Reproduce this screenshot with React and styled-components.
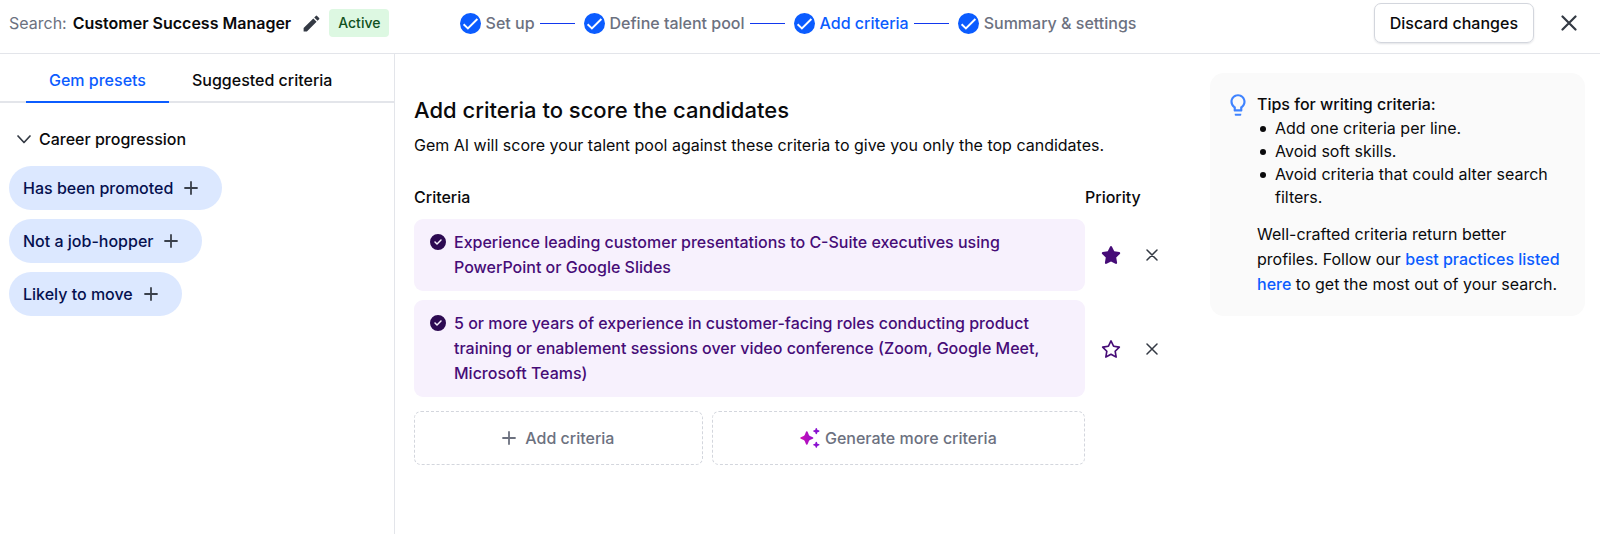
import { useState } from "react";
import styled, { createGlobalStyle } from "styled-components";
import { MdEdit, MdOutlineLightbulb } from "react-icons/md";
import { FaCircleCheck, FaRegStar, FaStar } from "react-icons/fa6";

const GlobalStyle = createGlobalStyle`
  :root {
    --color-blue: #0b5cff;
    --color-blue-100: #dce8ff;
    --color-navy: #05104f;
    --color-purple: #460c77;
    --color-purple-50: #f7f1fd;
    --color-grey-50: #fafafa;
    --color-grey-200: #e3e5ea;
    --color-grey-300: #d3d6dd;
    --color-grey-500: #6c717f;
    --color-grey-700: #343a44;
    --color-ink: #0a0a0c;
  }

  * {
    box-sizing: border-box;
    margin: 0;
    padding: 0;
  }

  body {
    font-family: Inter, "Liberation Sans", sans-serif;
    font-size: 16px;
    line-height: 24px;
    color: var(--color-ink);
    background-color: #fff;
  }

  button {
    font: inherit;
    color: inherit;
    background: none;
    border: none;
    cursor: pointer;
  }

  svg {
    display: block;
    flex-shrink: 0;
  }
`;

const Page = styled.div`
  display: flex;
  flex-direction: column;
  min-height: 100vh;
`;

const StyledHeader = styled.header`
  display: grid;
  grid-template-columns: 1fr auto 1fr;
  align-items: center;
  padding: 3px 13px 10px 9px;
  border-bottom: 1px solid var(--color-grey-200);
`;

const SearchInfo = styled.div`
  display: flex;
  align-items: center;
`;

const SearchLabel = styled.span`
  color: var(--color-grey-500);
  margin-right: 6px;
`;

const SearchName = styled.h1`
  font-size: 16px;
  font-weight: 600;
`;

const EditButton = styled.button`
  margin: 0 7px 0 10px;
  color: var(--color-grey-700);
`;

const Badge = styled.span`
  padding: 2px 9px;
  border-radius: 4px;
  font-size: 14px;
  font-weight: 500;
  color: #0f5120;
  background-color: #ddf8e2;
`;

const Steps = styled.ol`
  display: flex;
  align-items: center;
  list-style: none;
`;

const Step = styled.li`
  display: flex;
  align-items: center;
  gap: 5px;
  font-weight: 500;
  color: ${(props) =>
    props.$current ? "var(--color-blue)" : "var(--color-grey-500)"};

  &:not(:last-child)::after {
    content: "";
    width: 35px;
    height: 1px;
    margin-right: 9px;
    background-color: #1238ee;
  }
`;

const HeaderActions = styled.div`
  display: flex;
  align-items: center;
  justify-content: flex-end;
  gap: 21px;
  padding-right: 4px;
`;

const OutlineButton = styled.button`
  padding: 7px 15px;
  border: 1px solid var(--color-grey-300);
  border-radius: 7px;
  font-weight: 500;
  box-shadow: 0 1px 2px rgba(20, 25, 50, 0.12);
`;

const IconButton = styled.button`
  display: grid;
  place-items: center;
  width: 28px;
  height: 28px;
  color: ${(props) => props.$color || "var(--color-grey-700)"};
`;

const Content = styled.div`
  display: flex;
  flex: 1;
`;

const Sidebar = styled.aside`
  flex: 0 0 395px;
  border-right: 1px solid var(--color-grey-200);
`;

const Tabs = styled.div`
  display: flex;
  padding: 0 26px;
  box-shadow: inset 0 -2px 0 var(--color-grey-200);
`;

const Tab = styled.button`
  padding: 14px 23px 9px;
  font-weight: 500;
  color: ${(props) => (props.$active ? "var(--color-blue)" : "inherit")};
  border-bottom: 2px solid
    ${(props) => (props.$active ? "var(--color-blue)" : "transparent")};
`;

const GroupToggle = styled.button`
  display: flex;
  align-items: center;
  gap: 8px;
  margin: 24px 0 15px 17px;
  font-weight: 500;

  svg {
    color: var(--color-grey-700);
    transform: ${(props) => (props.$open ? "none" : "rotate(-90deg)")};
  }
`;

const PresetList = styled.ul`
  display: flex;
  flex-direction: column;
  align-items: flex-start;
  gap: 9px;
  padding-left: 9px;
  list-style: none;
`;

const Preset = styled.button`
  display: flex;
  align-items: center;
  gap: 11px;
  padding: 10px 24px 10px 14px;
  border-radius: 22px;
  font-weight: 500;
  color: var(--color-navy);
  background-color: var(--color-blue-100);

  svg {
    color: #3a404b;
  }
`;

const Main = styled.main`
  flex: 1;
  display: grid;
  grid-template-columns: minmax(0, 1fr) 375px;
  align-items: start;
  gap: 43px;
  padding: 19px 15px 19px 19px;
`;

const Editor = styled.section`
  padding-top: 20px;
`;

const Title = styled.h2`
  font-size: 22px;
  line-height: 34px;
  font-weight: 500;
`;

const Subtitle = styled.p`
  margin: 6px 0 28px;
`;

const Columns = styled.div`
  display: grid;
  grid-template-columns: minmax(0, 1fr) 82px;
`;

const ColumnTitle = styled.h3`
  font-size: 16px;
  font-weight: 500;
  margin-bottom: 10px;
`;

const CriteriaList = styled.ul`
  display: flex;
  flex-direction: column;
  gap: 9px;
  list-style: none;
`;

const CriterionText = styled.p`
  display: flex;
  gap: 8px;
  padding: 11px 30px 11px 16px;
  border-radius: 9px;
  line-height: 25px;
  font-weight: 500;
  color: var(--color-purple);
  background-color: var(--color-purple-50);

  svg {
    margin-top: 4px;
    color: #2d0a52;
  }
`;

const CriterionActions = styled.div`
  display: flex;
  align-items: center;
  gap: 13px;
  padding-left: 12px;
`;

const DashedButton = styled.button`
  flex: 1 1 auto;
  display: flex;
  align-items: center;
  justify-content: center;
  gap: ${(props) => props.$gap}px;
  padding: 14px;
  border: 1px dashed var(--color-grey-300);
  border-radius: 7px;
  font-weight: 500;
  color: var(--color-grey-500);
`;

const AddRow = styled.div`
  display: flex;
  gap: 9px;
  margin-top: 14px;
`;

const TipsCard = styled.aside`
  display: flex;
  gap: 6px;
  padding: 19px 18px 19px 15px;
  border-radius: 14px;
  background-color: var(--color-grey-50);

  > svg {
    color: #3f83ff;
  }
`;

const TipsTitle = styled.h3`
  font-size: 16px;
  font-weight: 500;
  line-height: 25px;
`;

const TipsList = styled.ul`
  margin-bottom: 13px;
  line-height: 23px;
  list-style: none;
`;

const TipsItem = styled.li`
  display: flex;
  gap: 9px;

  &::before {
    content: "";
    flex-shrink: 0;
    width: 6px;
    height: 6px;
    margin: 9px 0 0 3px;
    border-radius: 50%;
    background-color: currentColor;
  }
`;

const TipsNote = styled.p`
  line-height: 25px;
`;

const TipsLink = styled.a`
  font-weight: 500;
  color: var(--color-blue);
  text-decoration: none;
`;

const steps = [
  "Set up",
  "Define talent pool",
  "Add criteria",
  "Summary & settings",
];

const tabs = ["Gem presets", "Suggested criteria"];

const presets = ["Has been promoted", "Not a job-hopper", "Likely to move"];

const initialCriteria = [
  {
    id: 1,
    text: "Experience leading customer presentations to C-Suite executives using PowerPoint or Google Slides",
    starred: true,
  },
  {
    id: 2,
    text: "5 or more years of experience in customer-facing roles conducting product training or enablement sessions over video conference (Zoom, Google Meet, Microsoft Teams)",
    starred: false,
  },
];

const tips = [
  "Add one criteria per line.",
  "Avoid soft skills.",
  "Avoid criteria that could alter search filters.",
];

function LineIcon({ d, size = 14, width = 2 }) {
  return (
    <svg
      width={size}
      height={size}
      viewBox={`0 0 ${size} ${size}`}
      fill="none"
      stroke="currentColor"
      strokeWidth={width}
      strokeLinecap="round"
      strokeLinejoin="round"
      aria-hidden="true"
    >
      <path d={d} />
    </svg>
  );
}

function PlusIcon() {
  return <LineIcon d="M7 1v12M1 7h12" width={1.8} />;
}

function StepIcon() {
  return (
    <svg width="21" height="21" viewBox="0 0 21 21" aria-hidden="true">
      <circle cx="10.5" cy="10.5" r="10.5" fill="#0b5cff" />
      <path
        d="M3.6 11.3l4.3 4.1L17.4 6"
        fill="none"
        stroke="#fff"
        strokeWidth="1.9"
      />
    </svg>
  );
}

function SparkleIcon() {
  return (
    <svg width="20" height="20" viewBox="0 0 20 20" aria-hidden="true">
      <defs>
        <linearGradient id="sparkle" x1="0" x2="20" gradientUnits="userSpaceOnUse">
          <stop offset="0" stopColor="#cf0fb4" />
          <stop offset="1" stopColor="#7a12d6" />
        </linearGradient>
      </defs>
      <g fill="url(#sparkle)">
        <path d="M6.8 3.3Q7.5 3.3 7.9 4.5L8.9 7Q9.2 7.7 9.9 8L12.2 9Q13.4 9.5 13.4 10T12.2 11L9.9 12Q9.2 12.3 8.9 13L7.9 15.5Q7.5 16.7 6.8 16.7T5.7 15.5L4.7 13Q4.4 12.3 3.7 12L1.4 11Q.2 10.5 .2 10T1.4 9L3.7 8Q4.4 7.7 4.7 7L5.7 4.5Q6.1 3.3 6.8 3.3Z" />
        <path d="M16.3 0Q16.9 0 17.1 .8L17.4 2L18.6 2.3Q19.5 2.6 19.5 3.1T18.6 3.9L17.4 4.2L17.1 5.4Q16.9 6.2 16.3 6.2T15.5 5.4L15.2 4.2L14 3.9Q13.2 3.6 13.2 3.1T14 2.3L15.2 2L15.5 .8Q15.7 0 16.3 0Z" />
        <path d="M16.3 13.7Q16.9 13.7 17.1 14.5L17.4 15.7L18.6 16Q19.5 16.3 19.5 16.8T18.6 17.6L17.4 17.9L17.1 19.1Q16.9 19.9 16.3 19.9T15.5 19.1L15.2 17.9L14 17.6Q13.2 17.3 13.2 16.8T14 16L15.2 15.7L15.5 14.5Q15.7 13.7 16.3 13.7Z" />
      </g>
    </svg>
  );
}

function Header() {
  return (
    <StyledHeader>
      <SearchInfo>
        <SearchLabel>Search:</SearchLabel>
        <SearchName>Customer Success Manager</SearchName>
        <EditButton aria-label="Edit search name">
          <MdEdit size={21} />
        </EditButton>
        <Badge>Active</Badge>
      </SearchInfo>

      <Steps>
        {steps.map((step) => (
          <Step
            key={step}
            $current={step === "Add criteria"}
            aria-current={step === "Add criteria" ? "step" : undefined}
          >
            <StepIcon />
            {step}
          </Step>
        ))}
      </Steps>

      <HeaderActions>
        <OutlineButton>Discard changes</OutlineButton>
        <IconButton aria-label="Close">
          <LineIcon d="M1.5 1.5l13 13M14.5 1.5l-13 13" size={16} width={2.2} />
        </IconButton>
      </HeaderActions>
    </StyledHeader>
  );
}

function PresetsPanel() {
  const [activeTab, setActiveTab] = useState(tabs[0]);
  const [open, setOpen] = useState(true);

  return (
    <Sidebar>
      <Tabs role="tablist">
        {tabs.map((tab) => (
          <Tab
            key={tab}
            role="tab"
            aria-selected={tab === activeTab}
            $active={tab === activeTab}
            onClick={() => setActiveTab(tab)}
          >
            {tab}
          </Tab>
        ))}
      </Tabs>

      <GroupToggle
        $open={open}
        aria-expanded={open}
        onClick={() => setOpen(!open)}
      >
        <LineIcon d="M1 4l6 6.5L13 4" width={1.7} />
        Career progression
      </GroupToggle>

      {open && (
        <PresetList>
          {presets.map((preset) => (
            <li key={preset}>
              <Preset>
                {preset}
                <PlusIcon />
              </Preset>
            </li>
          ))}
        </PresetList>
      )}
    </Sidebar>
  );
}

function Criterion({ criterion, onStar, onRemove }) {
  return (
    <Columns as="li">
      <CriterionText>
        <FaCircleCheck size={16} />
        <span>{criterion.text}</span>
      </CriterionText>
      <CriterionActions>
        <IconButton
          $color="var(--color-purple)"
          aria-label="Priority"
          aria-pressed={criterion.starred}
          onClick={onStar}
        >
          {criterion.starred ? <FaStar size={20} /> : <FaRegStar size={20} />}
        </IconButton>
        <IconButton aria-label="Remove criteria" onClick={onRemove}>
          <LineIcon d="M1 1l10 10M11 1L1 11" size={12} width={1.5} />
        </IconButton>
      </CriterionActions>
    </Columns>
  );
}

function CriteriaEditor() {
  const [criteria, setCriteria] = useState(initialCriteria);

  function toggleStar(id) {
    setCriteria((list) =>
      list.map((c) => (c.id === id ? { ...c, starred: !c.starred } : c))
    );
  }

  function remove(id) {
    setCriteria((list) => list.filter((c) => c.id !== id));
  }

  return (
    <Editor>
      <Title>Add criteria to score the candidates</Title>
      <Subtitle>
        Gem AI will score your talent pool against these criteria to give you
        only the top candidates.
      </Subtitle>

      <Columns>
        <ColumnTitle>Criteria</ColumnTitle>
        <ColumnTitle>Priority</ColumnTitle>
      </Columns>

      <CriteriaList>
        {criteria.map((criterion) => (
          <Criterion
            key={criterion.id}
            criterion={criterion}
            onStar={() => toggleStar(criterion.id)}
            onRemove={() => remove(criterion.id)}
          />
        ))}
      </CriteriaList>

      <Columns>
        <AddRow>
          <DashedButton $gap={9}>
            <PlusIcon />
            Add criteria
          </DashedButton>
          <DashedButton $gap={5}>
            <SparkleIcon />
            Generate more criteria
          </DashedButton>
        </AddRow>
      </Columns>
    </Editor>
  );
}

function Tips() {
  return (
    <TipsCard>
      <MdOutlineLightbulb size={26} />
      <div>
        <TipsTitle>Tips for writing criteria:</TipsTitle>
        <TipsList>
          {tips.map((tip) => (
            <TipsItem key={tip}>{tip}</TipsItem>
          ))}
        </TipsList>
        <TipsNote>
          Well-crafted criteria return better profiles. Follow our{" "}
          <TipsLink href="#best-practices">best practices listed here</TipsLink>{" "}
          to get the most out of your search.
        </TipsNote>
      </div>
    </TipsCard>
  );
}

function App() {
  return (
    <Page>
      <GlobalStyle />
      <Header />
      <Content>
        <PresetsPanel />
        <Main>
          <CriteriaEditor />
          <Tips />
        </Main>
      </Content>
    </Page>
  );
}

export default App;
